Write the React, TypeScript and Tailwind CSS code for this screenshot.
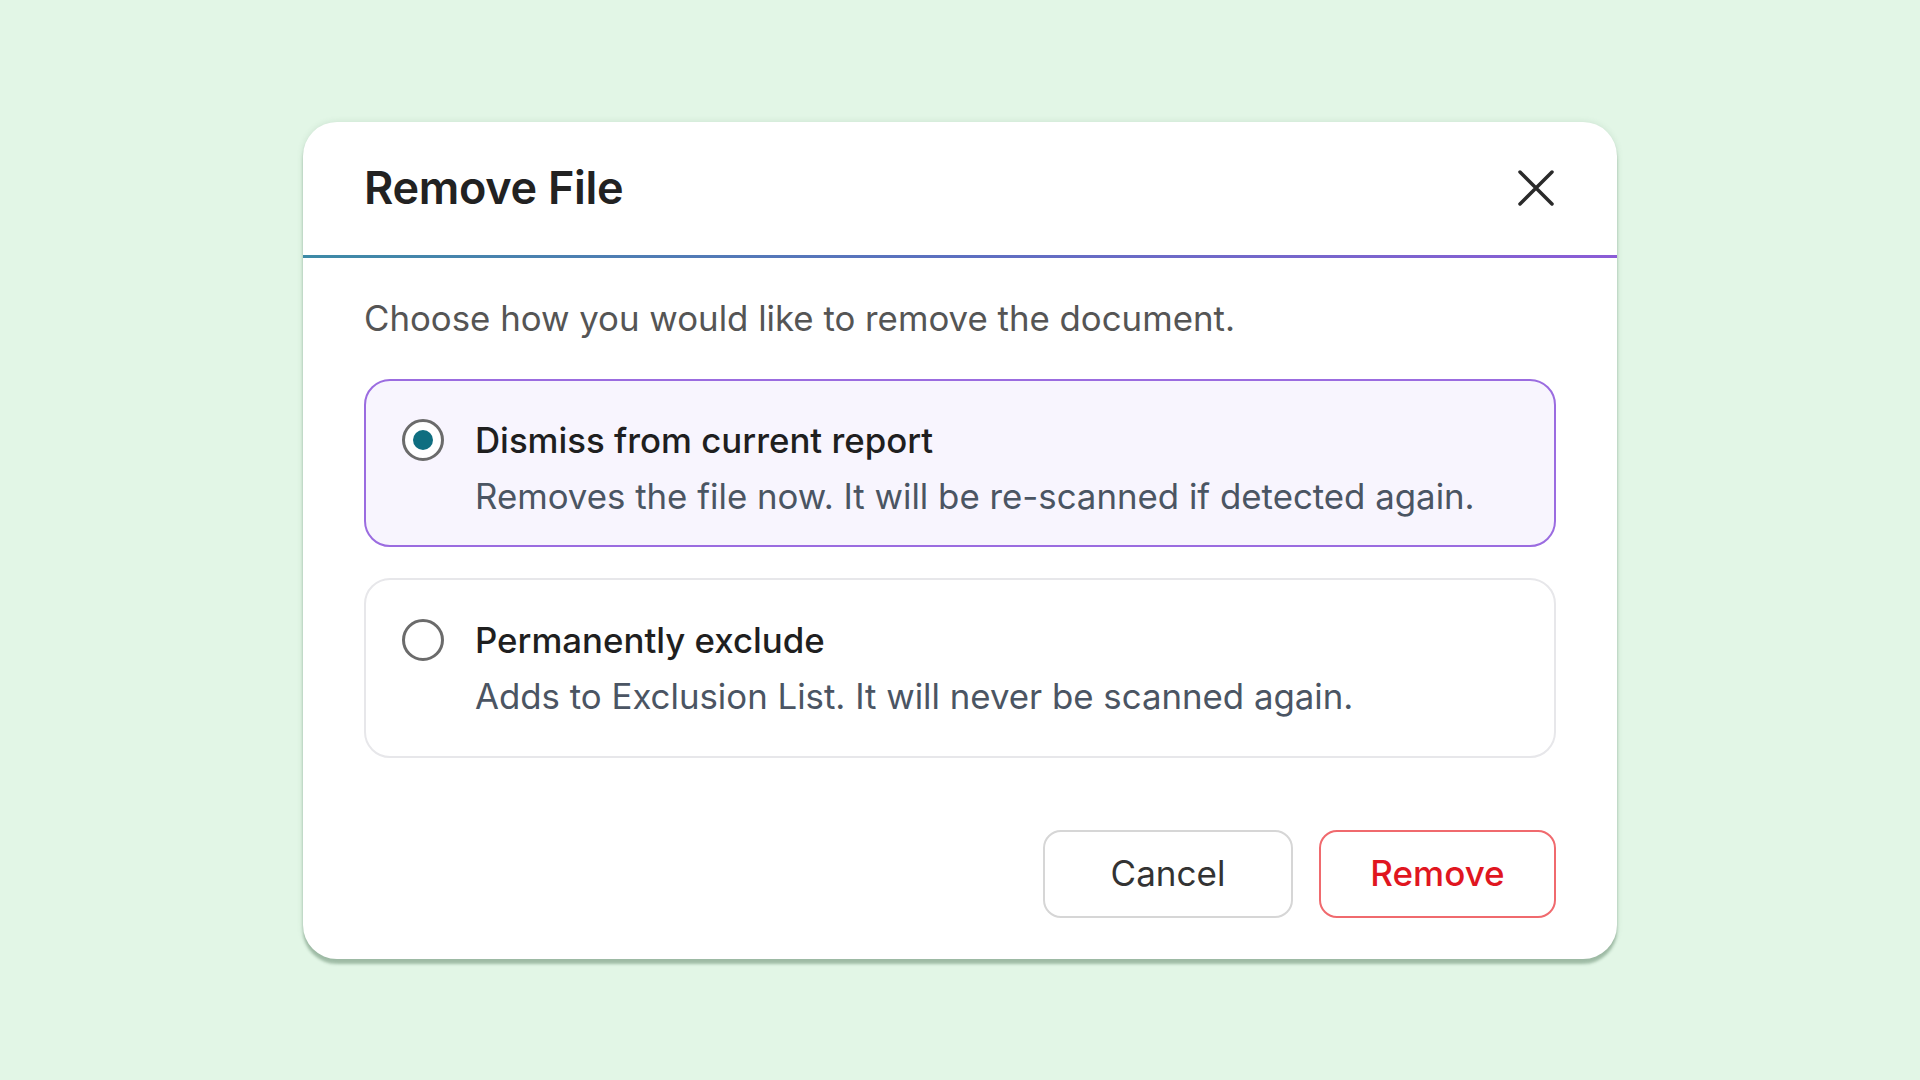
function RadioDot({ checked }: { checked: boolean }) {
  return (
    <span className="flex h-[42px] w-[42px] shrink-0 items-center justify-center rounded-full border-[3px] border-[#6b6b6b] bg-white">
      {checked && <span className="h-[20px] w-[20px] rounded-full bg-[#0f6e80]" />}
    </span>
  );
}

function Option({
  title,
  desc,
  checked,
  className,
}: {
  title: string;
  desc: string;
  checked: boolean;
  className: string;
}) {
  return (
    <div className={`rounded-[26px] border-2 pl-[36px] pr-8 ${className}`}>
      <div className="flex items-center gap-[31px]">
        <RadioDot checked={checked} />
        <div className="text-[34.8px] font-medium leading-[40px] text-[#1f1f1f]">{title}</div>
      </div>
      <div className="ml-[73px] mt-[15px] text-[34.8px] leading-[40px] text-[#4b5563]">{desc}</div>
    </div>
  );
}

export default function App() {
  return (
    <div
      className="flex min-h-screen items-center justify-center bg-[#e2f6e6]"
      style={{ fontFamily: 'Inter, "Noto Sans", sans-serif' }}
    >
      <div className="w-[1314px] rounded-[34px] bg-white shadow-[0_5px_3px_rgba(70,110,80,0.4),0_0_6px_rgba(70,110,80,0.15)]">
        {/* header */}
        <div className="flex h-[133px] items-center justify-between px-[61px]">
          <h1 className="text-[45px] font-semibold tracking-[-0.3px] text-[#222]">Remove File</h1>
          <svg width="36" height="36" viewBox="0 0 36 36" className="mr-[2px] text-[#2a2a2a]">
            <path d="M2 2 L34 34 M34 2 L2 34" stroke="currentColor" strokeWidth="3.5" strokeLinecap="round" fill="none" />
          </svg>
        </div>
        <div className="h-[3px] bg-gradient-to-r from-[#3d8aa6] via-[#5c6fc0] to-[#8b5cd6]" />

        {/* body */}
        <div className="px-[61px] pb-[41px] pt-[40px]">
          <p className="text-[34.8px] leading-[40px] text-[#555]">
            Choose how you would like to remove the document.
          </p>

          <Option
            checked
            title="Dismiss from current report"
            desc="Removes the file now. It will be re-scanned if detected again."
            className="mt-[41px] border-[#9b6ce0] bg-[#f8f5fe] pb-[29px] pt-[38px]"
          />
          <Option
            checked={false}
            title="Permanently exclude"
            desc="Adds to Exclusion List. It will never be scanned again."
            className="mt-[31px] border-[#e7e7ea] bg-white pb-[40px] pt-[39px]"
          />

          <div className="mt-[72px] flex justify-end gap-[26px]">
            <button className="h-[88px] w-[250px] rounded-[18px] border-2 border-[#d6d6d6] bg-white text-[35px] text-[#333]">
              Cancel
            </button>
            <button className="h-[88px] w-[237px] rounded-[18px] border-2 border-[#f06a6e] bg-white text-[35px] font-medium text-[#e0161f]">
              Remove
            </button>
          </div>
        </div>
      </div>
    </div>
  );
}
